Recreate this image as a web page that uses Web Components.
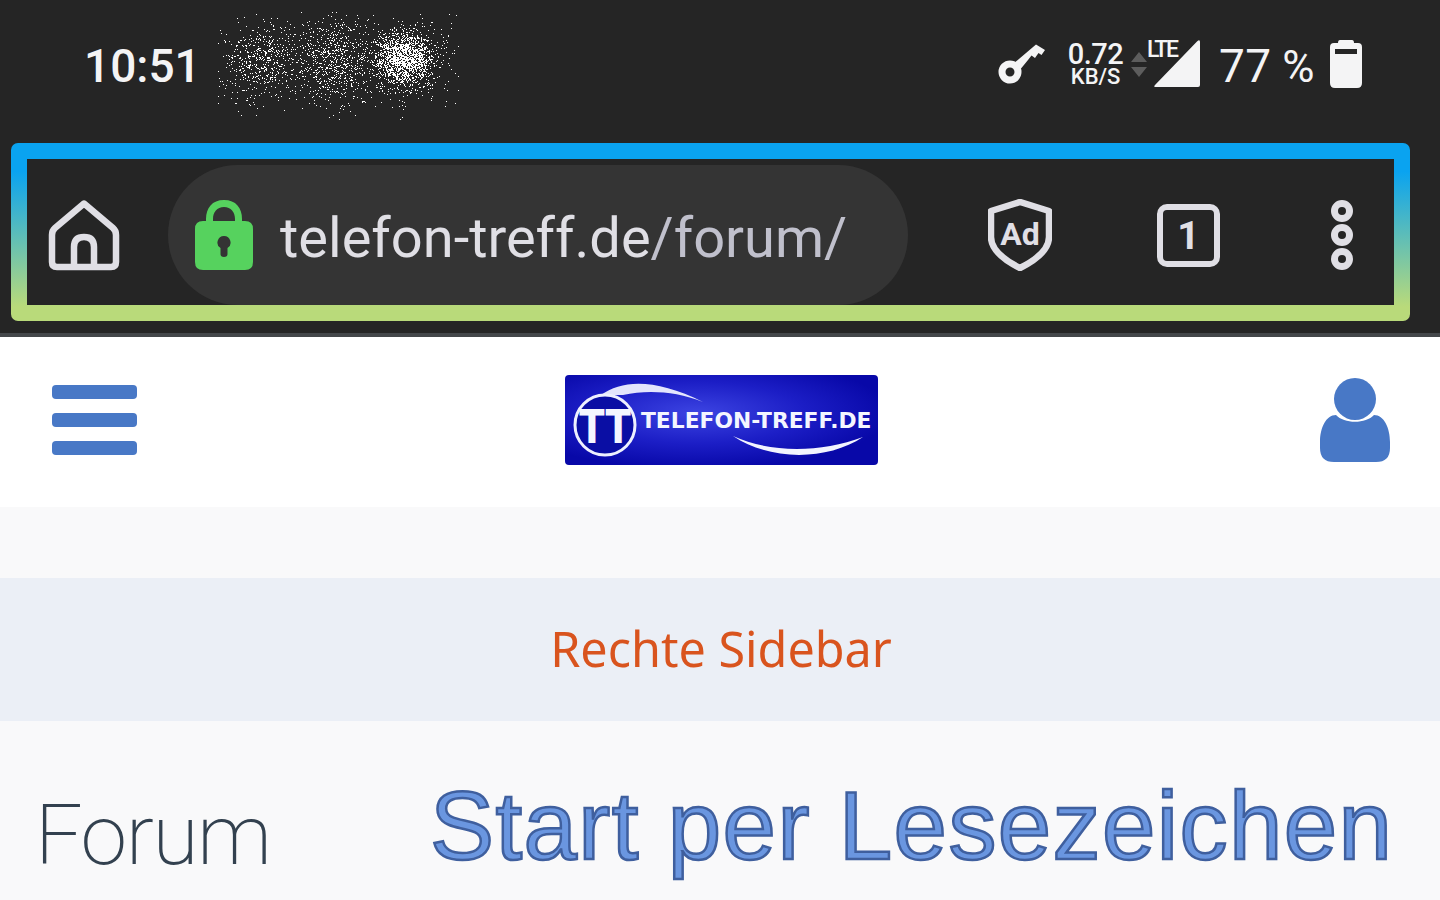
<!DOCTYPE html>
<html lang="de"><head><meta charset="utf-8"><title>Forum</title>
<style>html,body{margin:0;padding:0;background:#f9f9fa}body{width:1440px;height:900px;overflow:hidden;font-family:Roboto,sans-serif}</style>
</head><body>
<script>
function mk(name, html, init){
  customElements.define(name, class extends HTMLElement{
    connectedCallback(){ if(this.shadowRoot) return; const r=this.attachShadow({mode:'open'}); r.innerHTML=html; if(init) init(r); }
  });
}
function noisePath(){
  let s=12345; const rnd=()=>{s=(s*1664525+1013904223)>>>0;return s/4294967296};
  const gauss=()=>(rnd()+rnd()+rnd()+rnd()-2);
  const blobs=[[44,50,26,24,560],[118,48,25,27,740],[188,46,17,15,1400],[190,48,30,25,500]];
  let d='';
  for(const [cx,cy,sx,sy,n] of blobs){for(let i=0;i<n;i++){
    const x=Math.round(cx+gauss()*sx*1.4),y=Math.round(cy+gauss()*sy*1.4);
    if(x<0||y<0||x>242||y>108)continue;
    d+=`M${x} ${y}h1v1h-1z`;
  }}
  return d;
}
mk('phone-status',`<style>
:host{display:flex;align-items:flex-start;height:143px;background:#252525;color:#f4f4f5;box-sizing:border-box;padding-left:84px;font-family:Roboto,sans-serif}
.time{font-size:46px;font-weight:500;line-height:54px;margin-top:39px;width:132px;white-space:nowrap}
.noise{margin-top:12px;display:block}
.right{margin-left:auto;display:flex;align-items:flex-start;padding-right:78px;padding-top:39px}
.speed{display:flex;flex-direction:column;align-items:center;margin-left:20px;width:55px;margin-top:3px}
.speed b{font-weight:500;font-size:29px;line-height:25px;letter-spacing:-.5px}
.speed i{font-style:normal;font-weight:500;font-size:22px;line-height:20px;margin-top:0;letter-spacing:-.1px}
.arrows{margin:13px 0 0 8px;display:block}
.sig{position:relative;width:54px;height:50px;margin-left:1px}
.sig svg{display:block;margin-left:5px}
.sig span{position:absolute;left:-1px;top:-1px;font-size:23px;font-weight:500;letter-spacing:-2.300px;line-height:24px}
.pct{font-size:46px;line-height:54px;margin-left:17px;white-space:nowrap;letter-spacing:.5px;width:101px}
.pct small{font-size:44px;margin-left:-1px}
.bat{display:block;margin-left:10px}
</style>
<div class="time">10:51</div>
<svg class="noise" width="243" height="109" viewBox="0 0 243 109"><path id="n" fill="#fff"/></svg>
<div class="right">
<svg width="50" height="44" viewBox="0 0 50 44" style="display:block;margin-top:4px"><circle cx="12" cy="29" r="8" fill="none" stroke="#f4f4f5" stroke-width="7"/><path fill="#f4f4f5" d="M15 21 38 1.500 47 7 43.500 12 40.500 10 37 15 33.500 12.500 30 17 21 28Z"/></svg>
<div class="speed"><b>0.72</b><i>KB/S</i></div>
<svg class="arrows" width="16" height="26" viewBox="0 0 16 26"><path fill="#5d5d5d" d="M8 0l8 10H0zM0 15h16l-8 10z"/></svg>
<div class="sig"><svg width="48" height="48" viewBox="0 0 48 48"><path fill="#f4f4f5" d="M44 2.500Q47 0 47 3V46q0 2-2 2H3q-3 0-1-2z"/></svg><span>LTE</span></div>
<div class="pct">77<small> %</small></div>
<svg class="bat" width="32" height="48" viewBox="0 0 32 48" style="margin-top:1px"><path fill="#f4f4f5" fill-rule="evenodd" d="M10 0h12q2 0 2 3h4q4 0 4 4V43q0 5-5 5H5q-5 0-5-5V7q0-4 4-4h4q0-3 2-3zM5 9v5H27V9z"/></svg>
</div>`, r=>{r.getElementById('n').setAttribute('d',noisePath())});
mk('browser-bar',`<style>
:host{display:block;background:#252525;height:190px;box-sizing:border-box;padding:0 30px 12px 11px;font-family:Roboto,sans-serif}
.frame{height:178px;box-sizing:border-box;border-radius:7px;padding:16px;background:linear-gradient(#0aa3f0 0,#0aa3f0 16%,#b9da7a 92%,#b9da7a 100%)}
.in{height:146px;background:#252525;display:flex;align-items:flex-start;color:#e0dfe5}
.home{margin:41px 0 0 21px;width:72px;display:block}
.pill{margin:6px 0 0 48px;width:740px;height:140px;border-radius:70px;background:#343434;display:flex;align-items:center;box-sizing:border-box;padding-left:27px}
.url{font-size:56px;margin-left:27px;white-space:nowrap;line-height:64px;margin-top:6px}
.url span{color:#c0c0cc}
.ad{margin:40px 0 0 80px;display:block}
.tab-b{margin:45px 0 0 105px;width:63px;height:63px;box-sizing:border-box;border:6.500px solid #e0dfe5;border-radius:10px;display:flex;align-items:center;justify-content:center;font-size:39px;font-weight:700}
.dots{margin:41px 0 0 111px;display:block}
</style>
<div class="frame"><div class="in">
<svg class="home" width="72" height="72" viewBox="0 0 72 72" fill="none" stroke="#e0dfe5" stroke-width="6.500" stroke-linejoin="round"><path d="M36 3.500 65 28Q68 30.500 68 35V62Q68 67 63 67H9Q4 67 4 62V35Q4 30.500 7 28Z"/><path d="M26 67V47Q26 37 36 37T46 47V67"/></svg>
<div class="pill">
<svg width="58" height="70" viewBox="0 0 58 70" style="display:block;flex:none"><path fill="#56d25e" fill-rule="evenodd" d="M29 0C41 0 47 8 47 19V21H50Q58 21 58 29V62Q58 70 50 70H8Q0 70 0 62V29Q0 21 8 21H11V19C11 8 17 0 29 0ZM29 7C22 7 18 12 18 19V21H40V19C40 12 36 7 29 7ZM29 36A6.500 6.500 0 0 0 25.500 48V54Q25.500 57 29 57T32.500 54V48A6.500 6.500 0 0 0 29 36Z"/></svg>
<div class="url">telefon-treff.de<span>/forum/</span></div>
</div>
<svg class="ad" width="64" height="72" viewBox="0 0 64 72"><path fill="none" stroke="#e0dfe5" stroke-width="6.500" stroke-linejoin="round" d="M32 3 61 12V38C61 52 46 62 32 69 18 62 3 52 3 38V12Z"/><text x="32" y="46" text-anchor="middle" font-family="Roboto,sans-serif" font-weight="700" font-size="32" fill="#e0dfe5">Ad</text></svg>
<div class="tab-b">1</div>
<svg class="dots" width="22" height="70" viewBox="0 0 22 70" fill="none" stroke="#e0dfe5" stroke-width="7"><circle cx="11" cy="11" r="7.500"/><circle cx="11" cy="35" r="7.500"/><circle cx="11" cy="59" r="7.500"/></svg>
</div></div>`);
mk('site-header',`<style>
:host{display:flex;align-items:flex-start;height:174px;box-sizing:border-box;background:#fff;border-top:4px solid #44474a}
.burger{margin:48px 0 0 52px;display:flex;flex-direction:column;gap:14px;width:85px}
.burger i{display:block;height:14px;border-radius:4px;background:#4878c6}
.logo{display:block;margin:38px 0 0 428px}
.user{display:block;margin:41px 0 0 442px}
</style>
<div class="burger"><i></i><i></i><i></i></div>
<svg class="logo" width="313" height="90" viewBox="0 0 313 90">
<defs><radialGradient id="g" cx=".42" cy=".42" r=".62"><stop offset="0" stop-color="#3c44e2"/><stop offset=".55" stop-color="#1c1ec6"/><stop offset="1" stop-color="#0808a8"/></radialGradient></defs>
<rect width="313" height="90" rx="4" fill="url(#g)"/>
<path fill="#eef0ff" d="M36 20C58 4 92 4 138 27 110 16 82 15 58 20Z" opacity=".95"/>
<path fill="#f2f4ff" d="M168 61C205 78 255 78 298 62 262 86 205 86 168 61Z"/>
<circle cx="40" cy="50" r="30" fill="#0a0ea4" stroke="#eef0ff" stroke-width="3"/>
<text transform="translate(40 68) scale(1 1.25)" text-anchor="middle" font-family="DejaVu Sans,sans-serif" font-weight="700" font-size="37" fill="#f4f6ff">TT</text>
<text x="76" y="53" font-family="DejaVu Sans,sans-serif" font-weight="700" font-size="21.800" fill="#f4f6ff">TELEFON-TREFF.DE</text>
</svg>
<svg class="user" width="70" height="84" viewBox="0 0 70 84"><circle cx="35" cy="21" r="21" fill="#4878c6"/><path fill="#4878c6" d="M16 37C24 46 46 46 54 37 64 37 70 50 70 64V70Q70 84 56 84H14Q0 84 0 70V64C0 50 6 37 16 37Z"/></svg>`);
mk('sidebar-band',`<style>
:host{display:flex;align-items:center;justify-content:center;height:143px;margin-top:71px;background:#ebeff6;color:#d9541e;font:400 48.500px/1 "Noto Sans",sans-serif;padding:0 0 3px 2px;box-sizing:border-box}
</style><slot></slot>`);
mk('forum-title',`<style>
:host{display:flex;align-items:flex-start;background:#f9f9fa;height:179px;box-sizing:border-box;padding-left:35px;white-space:nowrap}
.f{font:200 84px/100px Roboto,sans-serif;color:#33414f;margin-top:65px;width:395px;letter-spacing:-1.400px}
.s{font:400 96px/110px "Liberation Sans",sans-serif;color:#6a96e0;-webkit-text-stroke:2.500px #3f5f9e;margin-top:50px;letter-spacing:1.400px}
</style><div class="f">Forum</div><div class="s"><slot></slot></div>`);
document.body.insertAdjacentHTML('beforeend',`<phone-status></phone-status><browser-bar></browser-bar><site-header></site-header><sidebar-band>Rechte Sidebar</sidebar-band><forum-title>Start per Lesezeichen</forum-title>`);
</script>
</body></html>
